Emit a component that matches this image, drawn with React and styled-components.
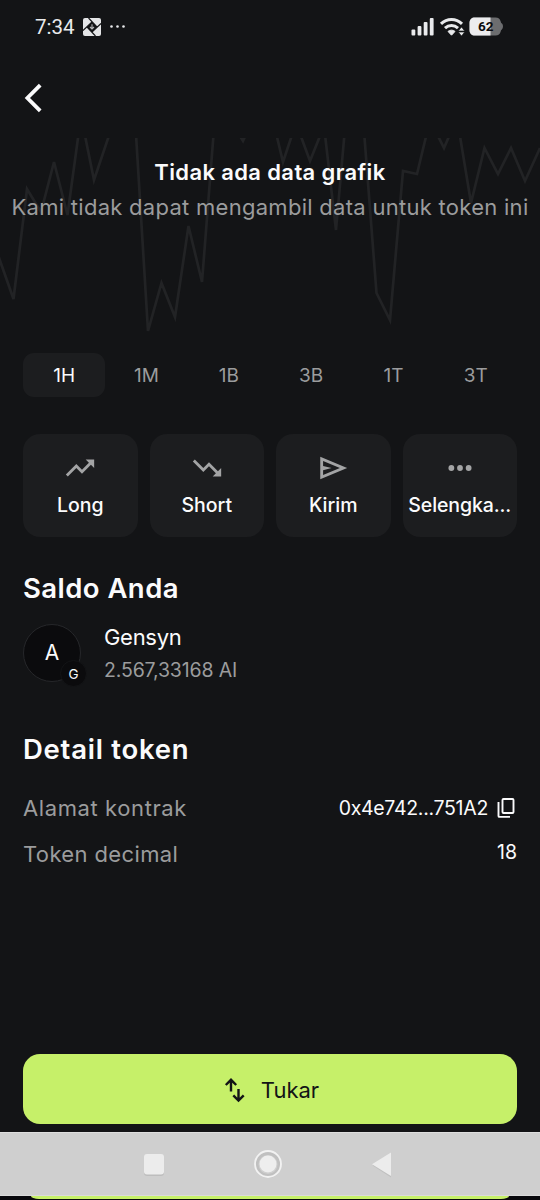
import React, { useState } from 'react';
import styled, { createGlobalStyle } from 'styled-components';

const theme = {
  background: '#131416',
  surface: '#1c1d1f',
  white: '#fbfbfc',
  muted: '#9b9c9d',
  accent: '#c6f069',
  nav: '#cfcfcf',
};

const GlobalStyle = createGlobalStyle`
  * {
    box-sizing: border-box;
  }
  body {
    margin: 0;
    background: ${theme.background};
    font-family: Inter, 'Liberation Sans', sans-serif;
  }
  button {
    font-family: inherit;
    border: 0;
    padding: 0;
    cursor: pointer;
  }
`;

const Screen = styled.div`
  display: flex;
  flex-direction: column;
  width: 540px;
  height: 1200px;
  overflow: hidden;
  background: ${theme.background};
  color: ${theme.white};
`;

const Text = styled.span`
  font-size: ${(p) => p.$size}px;
  font-weight: ${(p) => p.$weight || 400};
  line-height: ${(p) => p.$line || 32}px;
  letter-spacing: ${(p) => p.$spacing || 0}px;
  color: ${(p) => p.$color || 'inherit'};
  white-space: nowrap;
`;

const StatusBar = styled.div`
  display: flex;
  align-items: center;
  justify-content: space-between;
  height: 53px;
  padding: 0 36.5px 0 35px;
  font-family: Roboto, sans-serif;
  color: #e9eaec;
`;

const StatusGroup = styled.div`
  display: flex;
  align-items: center;
  gap: ${(p) => p.$gap}px;
`;

const Header = styled.div`
  display: flex;
  align-items: center;
  height: 85px;
  padding: 4px 22px 0;
`;

const BackButton = styled.button`
  display: flex;
  background: none;
  color: ${theme.white};
`;

const ChartPanel = styled.div`
  display: grid;
  height: 215px;
  > * {
    grid-area: 1 / 1;
  }
`;

const ChartMessage = styled.div`
  display: flex;
  flex-direction: column;
  align-items: center;
  padding-top: 16px;
`;

const Periods = styled.div`
  display: flex;
  height: 44px;
  margin: 0 23px 37px;
`;

const Period = styled.button`
  flex: 1;
  padding-top: 2px;
  border-radius: 11px;
  background: ${(p) => (p.$active ? theme.surface : 'none')};
  color: ${(p) => (p.$active ? theme.white : theme.muted)};
`;

const Actions = styled.div`
  display: grid;
  grid-template-columns: repeat(4, minmax(0, 1fr));
  gap: 12px;
  height: 103px;
  margin: 0 23px;
`;

const Action = styled.button`
  display: flex;
  flex-direction: column;
  align-items: center;
  padding-top: 17px;
  border-radius: 17px;
  background: ${theme.surface};
  color: ${theme.white};
  svg {
    margin-bottom: 4px;
    fill: #a3a4a5;
  }
`;

const Section = styled.div`
  display: flex;
  flex-direction: column;
  padding: ${(p) => p.$top}px 23px 0;
`;

const TokenRow = styled.div`
  display: flex;
  gap: 23px;
  margin-top: 17px;
`;

const Avatar = styled.div`
  position: relative;
  display: flex;
  align-items: center;
  justify-content: center;
  width: 58px;
  height: 58px;
  border: 1px solid #26272a;
  border-radius: 50%;
  background: #0b0b0d;
`;

const Badge = styled.div`
  position: absolute;
  right: -7px;
  bottom: -6px;
  display: flex;
  align-items: center;
  justify-content: center;
  width: 27px;
  height: 27px;
  border: 1px solid ${theme.background};
  border-radius: 50%;
  background: #0b0b0d;
`;

const TokenInfo = styled.div`
  display: flex;
  flex-direction: column;
  margin-top: -3px;
`;

const Details = styled.div`
  margin-top: 24px;
`;

const DetailRow = styled.div`
  display: flex;
  align-items: flex-start;
  justify-content: space-between;
  height: 46px;
`;

const DetailValue = styled.div`
  display: flex;
  align-items: center;
  gap: 8px;
  padding-right: 1px;
`;

const Footer = styled.div`
  margin-top: auto;
`;

const SwapButton = styled.button`
  display: flex;
  align-items: center;
  justify-content: center;
  gap: 14px;
  width: 494px;
  height: 69.4px;
  margin: 0 23px 8.3px;
  padding: 1px 0 0 2px;
  border-radius: 17px;
  background: ${theme.accent};
  color: #131416;
`;

const NavBar = styled.div`
  height: 64px;
  border-top: 1px solid #dedede;
  border-bottom: 1px solid #dadada;
  background: ${theme.nav};
`;

const BottomEdge = styled.div`
  height: 4px;
  padding: 0 31px;
  background: #08080c;
`;

const EdgeStrip = styled.div`
  height: 3px;
  border-radius: 0 0 8px 8px / 0 0 3px 3px;
  background: ${theme.accent};
`;

const Signal = () => (
  <svg width="24" height="20" viewBox="0 0 24 20" fill="currentColor">
    <rect x="0.5" y="12.5" width="3.8" height="6" rx="1" />
    <rect x="6.6" y="9" width="3.8" height="9.5" rx="1" />
    <rect x="12.7" y="5" width="3.8" height="13.5" rx="1" />
    <rect x="18.8" y="1" width="3.8" height="17.5" rx="1" />
  </svg>
);

const Wifi = () => (
  <svg width="26" height="20" viewBox="0 0 26 20" fill="none" stroke="currentColor">
    <path d="M2 6.9C8 .9 17 .9 23 6.9" strokeWidth="3" />
    <path d="M6 11.2c3.8-3.5 9.2-3.5 13 0" strokeWidth="3" />
    <path
      d="M9 14.4c2-1.7 5-1.7 7 0l-3.5 3.8z"
      fill="currentColor"
      strokeWidth="1"
      strokeLinejoin="round"
    />
    <path
      d="M22.5 10l3.2 4h-6.4zM22.5 19l3.2-4h-6.4z"
      fill="currentColor"
      stroke={theme.background}
      strokeWidth="0.6"
    />
  </svg>
);

const Battery = () => (
  <svg width="35" height="19" viewBox="0 0 35 19">
    <path
      d="M6 .5h20.5c3 0 4.500 1.500 5.200 4l.5 1.600c2.400.5 2.400 6.300 0 6.800l-.5 1.600c-.7 2.500-2.200 4-5.200 4H6c-3.500 0-5.500-2-5.500-5.500V6C.5 2.500 2.500.5 6 .5z"
      fill="#6c6d6f"
    />
    <path d="M6 .5h15.500v18H6C2.500 18.500.5 16.500.5 13V6C.5 2.500 2.500.5 6 .5z" fill="#ececee" />
    <text x="9" y="14.1" fontFamily="Roboto" fontSize="13.5" fontWeight="700" fill="#0c0c0e">
      62
    </text>
  </svg>
);

const AppBadge = () => (
  <svg width="20" height="20" viewBox="0 0 20 20">
    <rect x="1" y="1" width="18" height="18" rx="2" fill="#e4e5e7" />
    <path d="M10 5l5 5-5 5-5-5z" fill={theme.background} />
    <path
      d="M6.500 1l8.500 9M19 6.500L10 15M13.500 19L5 10M1 13.500L10 5"
      stroke={theme.background}
      strokeWidth="1.1"
    />
    <path
      d="M10 7.300v4.500M8 10l2 2 2-2"
      fill="none"
      stroke="#b4b5b7"
      strokeWidth="1.1"
    />
  </svg>
);

const Dots = () => (
  <svg width="17" height="6" viewBox="0 0 17 6" fill="currentColor">
    <circle cx="2.5" cy="2.5" r="1.3" />
    <circle cx="8.5" cy="2.5" r="1.3" />
    <circle cx="14.5" cy="2.5" r="1.3" />
  </svg>
);

const ChevronLeft = () => (
  <svg width="22" height="32" viewBox="0 0 22 32" fill="none" stroke="currentColor">
    <path d="M18.200 3.200L5.400 16l12.800 12.800" strokeWidth="3.800" />
  </svg>
);

const PlaceholderChart = () => (
  <svg width="540" height="215" viewBox="0 0 540 215" fill="none">
    <path
      d="M-2 117L13.500 161 27 51 41 74 54 24 67.500 77 81-22 94 42 121-38 135-20 148 193 161.500 145 175 179 188.500 88 202 144 216-35 229-20 243 3 256-25 270-30 283 24 296-15 310 23 324-12 336 92 349-55 363-20 376.500 155 390 182 403 33 417 36 430-18 444 10 457-20 471 65 484.500 10 498 36 511 10 525 43 540 10"
      stroke="#222325"
      strokeWidth="2.700"
    />
  </svg>
);

const actionIcons = {
  up: (
    <path d="M16 6l2.290 2.290-4.880 4.880-4-4L2 16.590 3.410 18l6-6 4 4 6.300-6.290L22 12V6z" />
  ),
  down: (
    <path d="M16 18l2.290-2.290-4.880-4.880-4 4L2 7.410 3.410 6l6 6 4-4 6.300 6.290L22 12v6z" />
  ),
  send: <path d="M3 20V4l19 8zm2-3l11.850-5L5 7v3.500l6 1.500-6 1.500z" />,
  more: (
    <>
      <circle cx="5.900" cy="12" r="2.050" />
      <circle cx="12" cy="12" r="2.050" />
      <circle cx="18.100" cy="12" r="2.050" />
    </>
  ),
};

const ActionIcon = ({ name }) => (
  <svg width="34" height="34" viewBox="0 0 24 24">
    {actionIcons[name]}
  </svg>
);

const CopyIcon = () => (
  <svg width="20" height="22" viewBox="0 0 20 22" fill="none" stroke="currentColor" strokeWidth="1.9">
    <rect x="6.5" y="2" width="11" height="14" rx="1" />
    <path d="M2.500 5v14c0 .6.300.9.900.9H14" />
  </svg>
);

const SwapIcon = () => (
  <svg width="24" height="26" viewBox="0 0 24 26" fill="none" stroke="currentColor" strokeWidth="2.4">
    <path d="M8 14.500V3M2.800 8L8 2.800 13.200 8M15.500 12v11.500M10.300 18.300l5.200 5.200 5.200-5.200" />
  </svg>
);

const NavIcons = () => (
  <svg width="540" height="62" viewBox="0 1133 540 62">
    <rect x="144" y="1155.5" width="20" height="20.5" rx="3" fill="#bdbdbd" />
    <rect x="144" y="1154" width="20" height="20.5" rx="3" fill="#ececec" />
    <circle cx="268" cy="1164.5" r="11.5" fill="none" stroke="#c0c0c0" strokeWidth="4" />
    <circle cx="268" cy="1164" r="13" fill="none" stroke="#f2f2f2" strokeWidth="1.9" />
    <circle cx="268" cy="1164" r="8.5" fill="#eee" />
    <path d="M391 1154v23.500l-18.500-12z" fill="#c0c0c0" />
    <path d="M391 1152.500v23.500l-19-11.700z" fill="#ececec" />
  </svg>
);

const periods = ['1H', '1M', '1B', '3B', '1T', '3T'];

const actions = [
  { icon: 'up', label: 'Long' },
  { icon: 'down', label: 'Short' },
  { icon: 'send', label: 'Kirim' },
  { icon: 'more', label: 'Selengka...', spacing: -0.1 },
];

const App = () => {
  const [period, setPeriod] = useState('1H');
  return (
    <Screen>
      <GlobalStyle />
      <StatusBar>
        <StatusGroup $gap={7}>
          <Text $size={20.5}>7:34</Text>
          <AppBadge />
          <Dots />
        </StatusGroup>
        <StatusGroup $gap={4}>
          <Signal />
          <Wifi />
          <Battery />
        </StatusGroup>
      </StatusBar>
      <Header>
        <BackButton aria-label="Kembali">
          <ChevronLeft />
        </BackButton>
      </Header>
      <ChartPanel>
        <PlaceholderChart />
        <ChartMessage>
          <Text $size={22} $weight={600} $line={36} $spacing={0.37}>
            Tidak ada data grafik
          </Text>
          <Text $size={22} $line={34} $spacing={0.28} $color={theme.muted}>
            Kami tidak dapat mengambil data untuk token ini
          </Text>
        </ChartMessage>
      </ChartPanel>
      <Periods>
        {periods.map((name) => (
          <Period key={name} $active={name === period} onClick={() => setPeriod(name)}>
            <Text $size={19}>{name}</Text>
          </Period>
        ))}
      </Periods>
      <Actions>
        {actions.map(({ icon, label, spacing }) => (
          <Action key={label}>
            <ActionIcon name={icon} />
            <Text $size={19.5} $weight={500} $spacing={spacing}>
              {label}
            </Text>
          </Action>
        ))}
      </Actions>
      <Section $top={33}>
        <Text $size={27.5} $weight={600} $line={37} $spacing={0.45}>
          Saldo Anda
        </Text>
        <TokenRow>
          <Avatar>
            <Text $size={21}>A</Text>
            <Badge>
              <Text $size={13.5}>G</Text>
            </Badge>
          </Avatar>
          <TokenInfo>
            <Text $size={22} $spacing={-0.3}>
              Gensyn
            </Text>
            <Text $size={19.5} $line={35} $spacing={-0.15} $color={theme.muted}>
              2.567,33168 AI
            </Text>
          </TokenInfo>
        </TokenRow>
      </Section>
      <Section $top={43}>
        <Text $size={27.5} $weight={600} $line={37} $spacing={0.75}>
          Detail token
        </Text>
        <Details>
          <DetailRow>
            <Text $size={22} $spacing={0.6} $color={theme.muted}>
              Alamat kontrak
            </Text>
            <DetailValue>
              <Text $size={19.5} $spacing={-0.3}>
                0x4e742...751A2
              </Text>
              <CopyIcon />
            </DetailValue>
          </DetailRow>
          <DetailRow>
            <Text $size={22} $spacing={0.37} $color={theme.muted}>
              Token decimal
            </Text>
            <Text $size={19.5} $line={29}>
              18
            </Text>
          </DetailRow>
        </Details>
      </Section>
      <Footer>
        <SwapButton>
          <SwapIcon />
          <Text $size={22}>Tukar</Text>
        </SwapButton>
        <NavBar>
          <NavIcons />
        </NavBar>
        <BottomEdge>
          <EdgeStrip />
        </BottomEdge>
      </Footer>
    </Screen>
  );
};

export default App;
